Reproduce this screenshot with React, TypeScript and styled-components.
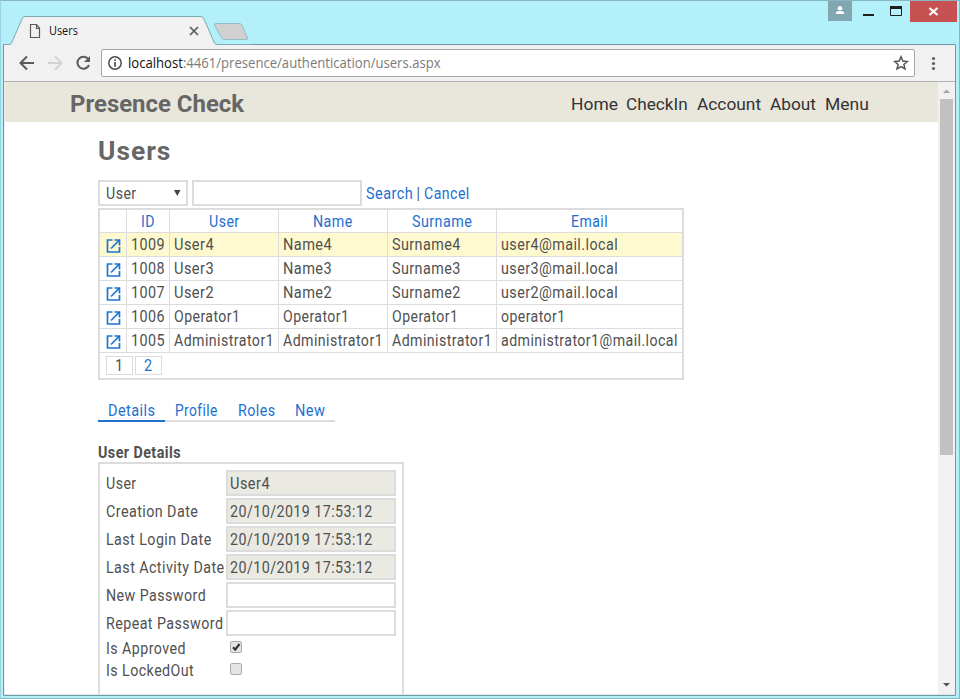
import React, { useLayoutEffect, useRef, useState } from "react";
import styled, { createGlobalStyle } from "styled-components";

const Global = createGlobalStyle`
  * { box-sizing: border-box; }
  body { margin: 0; overflow: hidden; background: #b4f0fa; }
`;

const blue = "#1e6fd0";
const line = "#dcdcdc";

/* Single-line label condensed to a given measure */
const FitBox = styled.span<{ $w: number }>`
  display: inline-block;
  width: ${(p) => p.$w}px;
  flex: none;
  text-align: left;
  white-space: pre;
`;
const FitInner = styled.span`
  display: inline-block;
  transform-origin: 0 50%;
`;
function Fit({ w, children }: { w: number; children: React.ReactNode }) {
  const ref = useRef<HTMLSpanElement>(null);
  const [scale, setScale] = useState(1);
  useLayoutEffect(() => {
    const measure = () => {
      if (ref.current) setScale(w / ref.current.offsetWidth);
    };
    measure();
    document.fonts?.ready.then(measure);
  }, [w]);
  return (
    <FitBox $w={w}>
      <FitInner ref={ref} style={{ transform: `scaleX(${scale})` }}>
        {children}
      </FitInner>
    </FitBox>
  );
}

const Window = styled.div`
  width: 960px;
  height: 699px;
  background: #b4f0fa;
  border: 1px solid #88b6c0;
  border-left-color: #9cd3de;
  padding: 0 3px 2px 2px;
  display: flex;
  flex-direction: column;
  font-family: "Open Sans", sans-serif;
`;
const TitleBar = styled.div`
  height: 43px;
  flex: none;
  display: flex;
  justify-content: space-between;
`;
const Tabs = styled.div`
  display: grid;
  grid-template-columns: 250px;
  height: 44px;
`;
const TabArt = styled.svg`
  grid-area: 1 / 1;
  display: block;
  z-index: 1;
`;
const TabLabel = styled.div`
  grid-area: 1 / 1;
  z-index: 2;
  padding: 20px 0 0 46px;
  font-size: 12px;
  line-height: 20px;
  color: #111;
`;
const Controls = styled.div`
  display: flex;
  height: 21px;
  margin-right: -1px;
`;
const UserButton = styled.div`
  width: 24px;
  height: 20px;
  background: #81a8b1;
`;
const WinButton = styled.div<{ $w: number; $close?: boolean }>`
  width: ${(p) => p.$w}px;
  height: 21px;
  background: ${(p) => (p.$close ? "#c75050" : "transparent")};
`;
const Frame = styled.div`
  flex: 1;
  min-height: 0;
  border: 1px solid #6d9ba5;
  border-radius: 1px;
  background: #fff;
  display: flex;
  flex-direction: column;
`;
const Toolbar = styled.div`
  height: 37px;
  flex: none;
  background: #f1f1f1;
  border-bottom: 1px solid #b0b3b0;
  display: flex;
  align-items: flex-start;
`;
const NavIcons = styled.svg`
  flex: none;
  width: 97px;
  height: 36px;
`;
const AddressBar = styled.div`
  margin-top: 4px;
  width: 814px;
  height: 28px;
  border: 1px solid #a6a6a6;
  border-radius: 2px;
  background: #fff;
  display: flex;
  align-items: center;
  font-size: 14px;
  line-height: 20px;
  color: #7b7b7b;
`;
const Host = styled.span`
  color: #111;
`;
const Info = styled.svg`
  flex: none;
  margin: 0 5px 0 5px;
`;
const Star = styled.svg`
  margin-left: auto;
  margin-right: 5px;
`;
const Dots = styled.svg`
  flex: none;
`;
const Viewport = styled.div`
  flex: 1;
  min-height: 0;
  display: flex;
  border-bottom: 1px solid #e3e6e6;
  border-left: 1px solid #eceeee;
`;
const Page = styled.div`
  flex: 1;
  min-width: 0;
  overflow: hidden;
  font-family: Roboto, sans-serif;
  color: #505050;
`;
const ScrollBar = styled.svg`
  flex: none;
  width: 17px;
  height: 612px;
  background: #f1f1f1;
`;
const SiteHeader = styled.header`
  height: 40px;
  background: #e9e6db;
  display: flex;
  align-items: flex-start;
  padding: 7px 70px 0 65px;
  justify-content: space-between;
`;
const Brand = styled.div`
  font-size: 24px;
  font-weight: 700;
  line-height: 30px;
  color: #666;
`;
const SiteNav = styled.nav`
  display: flex;
  gap: 9px;
  font-size: 16.5px;
  line-height: 31px;
  color: #333;
`;
const Main = styled.main`
  padding-left: 93px;
  font-size: 16px;
  letter-spacing: 0.5px;
`;
const Title = styled.h1`
  margin: 0;
  padding-top: 12px;
  height: 58px;
  font-size: 26px;
  line-height: 34px;
  color: #666;
  letter-spacing: 1px;
`;
const SearchRow = styled.div`
  display: flex;
  height: 26px;
  gap: 4px;
`;
const Field = styled.div<{ $w: number; $off?: boolean; $pad?: number }>`
  width: ${(p) => p.$w}px;
  height: 26px;
  border: 2px solid ${line};
  background: ${(p) => (p.$off ? "#eaeae2" : "#fff")};
  padding-left: ${(p) => p.$pad ?? 3}px;
  line-height: 23px;
  display: flex;
  justify-content: space-between;
`;
const Links = styled.div`
  line-height: 28px;
  color: ${blue};
  display: flex;
`;
const Separator = styled.span`
  width: 11px;
  text-align: center;
  color: #507090;
`;
const Table = styled.div`
  margin-top: 2px;
  width: 586px;
  border: 2px solid ${line};
`;
const Row = styled.div<{ $head?: boolean; $selected?: boolean }>`
  display: grid;
  grid-template-columns: 27px 43px 109px 109px 109px 185px;
  height: ${(p) => (p.$head ? 23 : 24)}px;
  line-height: 23px;
  border-bottom: 1px solid ${line};
  background: ${(p) => (p.$selected ? "#fff9cf" : "#fff")};
  color: ${(p) => (p.$head ? blue : "inherit")};
`;
const Cell = styled.div<{ $center?: boolean; $icon?: boolean }>`
  border-right: 1px solid ${line};
  padding-left: ${(p) => (p.$icon || p.$center ? 0 : 4)}px;
  text-align: ${(p) => (p.$center ? "center" : "left")};
  overflow: hidden;
  &:last-child { border-right: 0; }
`;
const OpenGlyph = styled.svg`
  display: block;
  margin: 5px 0 0 2px;
`;
const Pager = styled.div`
  height: 25px;
  display: flex;
  gap: 2px;
  padding: 3px 0 0 6px;
`;
const PageButton = styled.div<{ $link?: boolean }>`
  width: 27px;
  height: 19px;
  border: 1px solid ${line};
  line-height: 18px;
  text-align: center;
  color: ${(p) => (p.$link ? blue : "inherit")};
`;
const TabStrip = styled.div`
  display: flex;
  margin-top: 20px;
  height: 22px;
  width: 237px;
`;
const TabItem = styled.div<{ $w: number; $active?: boolean }>`
  width: ${(p) => p.$w}px;
  padding-left: 10px;
  line-height: 22px;
  color: ${blue};
  border-bottom: 2px solid ${(p) => (p.$active ? blue : line)};
`;
const Subtitle = styled.h2`
  margin: 20px 0 0;
  font-size: 16px;
  line-height: 22px;
  height: 20px;
`;
const Form = styled.div`
  width: 306px;
  height: 260px;
  border: 2px solid ${line};
  padding: 6px 0 0 6px;
`;
const FormRow = styled.div<{ $check?: boolean }>`
  display: grid;
  grid-template-columns: 120px 170px;
  height: ${(p) => (p.$check ? 22 : 28)}px;
  line-height: ${(p) => (p.$check ? 22 : 28)}px;
`;
const Check = styled.svg`
  margin: 3px 0 0 4px;
`;

function OpenIcon() {
  return (
    <OpenGlyph width="22" height="16" viewBox="0 0 22 16">
      <path d="M10.500 2H5.500v12h12V9M12.500 2h5v5.500M17 2.500 9 10.500" fill="none" stroke="#1976d2" strokeWidth="1.700" />
    </OpenGlyph>
  );
}

type Txt = [string, number];
const head: Txt[] = [["ID", 14], ["User", 31], ["Name", 40], ["Surname", 60], ["Email", 37]];
const rows: Txt[][] = [
  [["1009", 34], ["User4", 40], ["Name4", 49], ["Surname4", 69], ["user4@mail.local", 117]],
  [["1008", 34], ["User3", 40], ["Name3", 49], ["Surname3", 69], ["user3@mail.local", 117]],
  [["1007", 34], ["User2", 40], ["Name2", 49], ["Surname2", 69], ["user2@mail.local", 117]],
  [["1006", 34], ["Operator1", 66], ["Operator1", 66], ["Operator1", 66], ["operator1", 65]],
  [["1005", 34], ["Administrator1", 100], ["Administrator1", 100], ["Administrator1", 100], ["administrator1@mail.local", 177]],
];
const date = "20/10/2019 17:53:12";
const fields: { label: Txt; value?: Txt }[] = [
  { label: ["User", 31], value: ["User4", 40] },
  { label: ["Creation Date", 92], value: [date, 142.5] },
  { label: ["Last Login Date", 106], value: [date, 142.5] },
  { label: ["Last Activity Date", 118.5], value: [date, 142.5] },
  { label: ["New Password", 100.5] },
  { label: ["Repeat Password", 117.5] },
];
const nav: Txt[] = [["Home", 46.5], ["CheckIn", 61.5], ["Account", 64], ["About", 46], ["Menu", 43.5]];
const tabs: [string, number, number][] = [["Details", 47, 67], ["Profile", 43, 63], ["Roles", 37.5, 57], ["New", 30, 50]];

export default function App() {
  return (
    <>
      <Global />
      <Window>
        <TitleBar>
          <Tabs>
            <TabArt width="250" height="44" viewBox="3 1 250 44">
              <path d="M3 44.5H9.500Q11 44.500 12 42L22 19Q23 16.500 25 16.500H201Q203 16.500 204 19L214 42Q215 44.500 217 44.500V46H3z" fill="#f1f1f1" />
              <path d="M3 44.500H9.500Q11 44.500 12 42L22 19Q23 16.500 25 16.500H201Q203 16.500 204 19L214 42Q215 44.500 217 44.500H253" fill="none" stroke="#7ca9b2" />
              <path d="M216 23.500H239Q241 23.500 242 25L247.500 38Q248 39.500 246 39.500H225Q222 39.500 221 37L214.500 25Q214 23.500 216 23.500z" fill="#d0d0d0" stroke="#94bfc8" />
              <path d="M30.500 24.500H36.500L39.500 28V37.500H30.500zM36.500 24.500V28.500H39.500" fill="none" stroke="#5a5a5a" strokeWidth="1.2" />
              <path d="M190 27 198 35M198 27 190 35" stroke="#5a5a5a" strokeWidth="1.700" />
            </TabArt>
            <TabLabel><Fit w={29}>Users</Fit></TabLabel>
          </Tabs>
          <Controls>
            <UserButton>
              <svg width="24" height="20" viewBox="0 0 24 20"><circle cx="12" cy="7.300" r="2.300" fill="#fff" /><path d="M8 13v-1.200Q8 10 12 10t4 1.800V13z" fill="#fff" /></svg>
            </UserButton>
            <WinButton $w={31}><svg width="31" height="21"><path d="M11 13h11v2H11z" fill="#1e1e1e" /></svg></WinButton>
            <WinButton $w={27}><svg width="27" height="21"><path d="M7.500 5.500h11v9h-11z" fill="none" stroke="#1e1e1e" /><path d="M7 5h12v3H7z" fill="#1e1e1e" /></svg></WinButton>
            <WinButton $w={47} $close><svg width="47" height="21"><path d="M19.500 7 27.500 14M27.500 7 19.500 14" stroke="#fff" strokeWidth="2.200" /></svg></WinButton>
          </Controls>
        </TitleBar>
        <Frame>
          <Toolbar>
            <NavIcons viewBox="4 45 97 36">
              <path d="M34 63H21M27 56.500 20.500 63 27 69.500" fill="none" stroke="#5a5a5a" strokeWidth="2" />
              <path d="M48 63H61M55 56.500 61.500 63 55 69.500" fill="none" stroke="#d2d2d2" strokeWidth="2" />
              <path d="M88.300 59.200A6 6 0 1 0 89 65" fill="none" stroke="#5a5a5a" strokeWidth="2" />
              <path d="M90 56v6h-6z" fill="#5a5a5a" />
            </NavIcons>
            <AddressBar>
              <Info width="16" height="16" viewBox="0 0 16 16"><circle cx="8" cy="8" r="6.200" fill="none" stroke="#4d4d4d" strokeWidth="1.500" /><path d="M7.200 4.300h1.700v1.700H7.200zM7.200 7h1.700v4.700H7.200z" fill="#4d4d4d" /></Info>
              <Fit w={312.5}><Host>localhost</Host>:4461/presence/authentication/users.aspx</Fit>
              <Star width="16" height="16" viewBox="0 0 16 16"><path d="M8 1.800 9.800 6.100 14.400 6.500 10.900 9.500 12 14 8 11.600 4 14 5.100 9.500 1.600 6.500 6.200 6.100z" fill="none" stroke="#555" strokeWidth="1.500" /></Star>
            </AddressBar>
            <Dots width="36" height="36"><g fill="#5f5f5f"><circle cx="18.500" cy="13.500" r="1.600" /><circle cx="18.500" cy="18.500" r="1.600" /><circle cx="18.500" cy="23.500" r="1.600" /></g></Dots>
          </Toolbar>
          <Viewport>
            <Page>
              <SiteHeader>
                <Brand><Fit w={174.5}>Presence Check</Fit></Brand>
                <SiteNav>{nav.map(([t, w]) => <Fit key={t} w={w}>{t}</Fit>)}</SiteNav>
              </SiteHeader>
              <Main>
                <Title><Fit w={73}>Users</Fit></Title>
                <SearchRow>
                  <Field $w={90} $pad={6}>
                    <Fit w={31}>User</Fit>
                    <svg width="16" height="22"><path d="M4 8h6.500l-3.250 6z" fill="#444" /></svg>
                  </Field>
                  <Field $w={170} />
                  <Links><Fit w={47}>Search</Fit><Separator>|</Separator><Fit w={46}>Cancel</Fit></Links>
                </SearchRow>
                <Table>
                  <Row $head>
                    <Cell />
                    {head.map(([t, w]) => <Cell key={t} $center><Fit w={w}>{t}</Fit></Cell>)}
                  </Row>
                  {rows.map((r, i) => (
                    <Row key={i} $selected={i === 0}>
                      <Cell $icon><OpenIcon /></Cell>
                      {r.map(([t, w], j) => <Cell key={j}><Fit w={w}>{t}</Fit></Cell>)}
                    </Row>
                  ))}
                  <Pager>
                    <PageButton><Fit w={9}>1</Fit></PageButton>
                    <PageButton $link><Fit w={9}>2</Fit></PageButton>
                  </Pager>
                </Table>
                <TabStrip>
                  {tabs.map(([t, w, box], i) => <TabItem key={t} $w={box} $active={i === 0}><Fit w={w}>{t}</Fit></TabItem>)}
                </TabStrip>
                <Subtitle><Fit w={83}>User Details</Fit></Subtitle>
                <Form>
                  {fields.map(({ label, value }) => (
                    <FormRow key={label[0]}>
                      <Fit w={label[1]}>{label[0]}</Fit>
                      <Field $w={170} $off={!!value} $pad={2}>{value && <Fit w={value[1]}>{value[0]}</Fit>}</Field>
                    </FormRow>
                  ))}
                  {([["Is Approved", 80], ["Is LockedOut", 88]] as Txt[]).map(([t, w], i) => (
                    <FormRow key={t} $check>
                      <Fit w={w}>{t}</Fit>
                      <Check width="13" height="13" viewBox="0 0 13 13">
                        <rect x=".5" y=".5" width="11" height="11" rx="1.500" fill="#e4e4e4" stroke="#a9a9a9" />
                        {i === 0 && <path d="M3 6.300 5.200 8.600 9.500 3" fill="none" stroke="#333" strokeWidth="2.200" />}
                      </Check>
                    </FormRow>
                  ))}
                </Form>
              </Main>
            </Page>
            <ScrollBar viewBox="0 0 17 612">
              <path d="M5 11h7L8.500 7.500z" fill="#a3a3a3" />
              <path d="M2 17h13v356H2z" fill="#c1c1c1" />
              <path d="M5 601h7l-3.500 3.500z" fill="#505050" />
            </ScrollBar>
          </Viewport>
        </Frame>
      </Window>
    </>
  );
}
